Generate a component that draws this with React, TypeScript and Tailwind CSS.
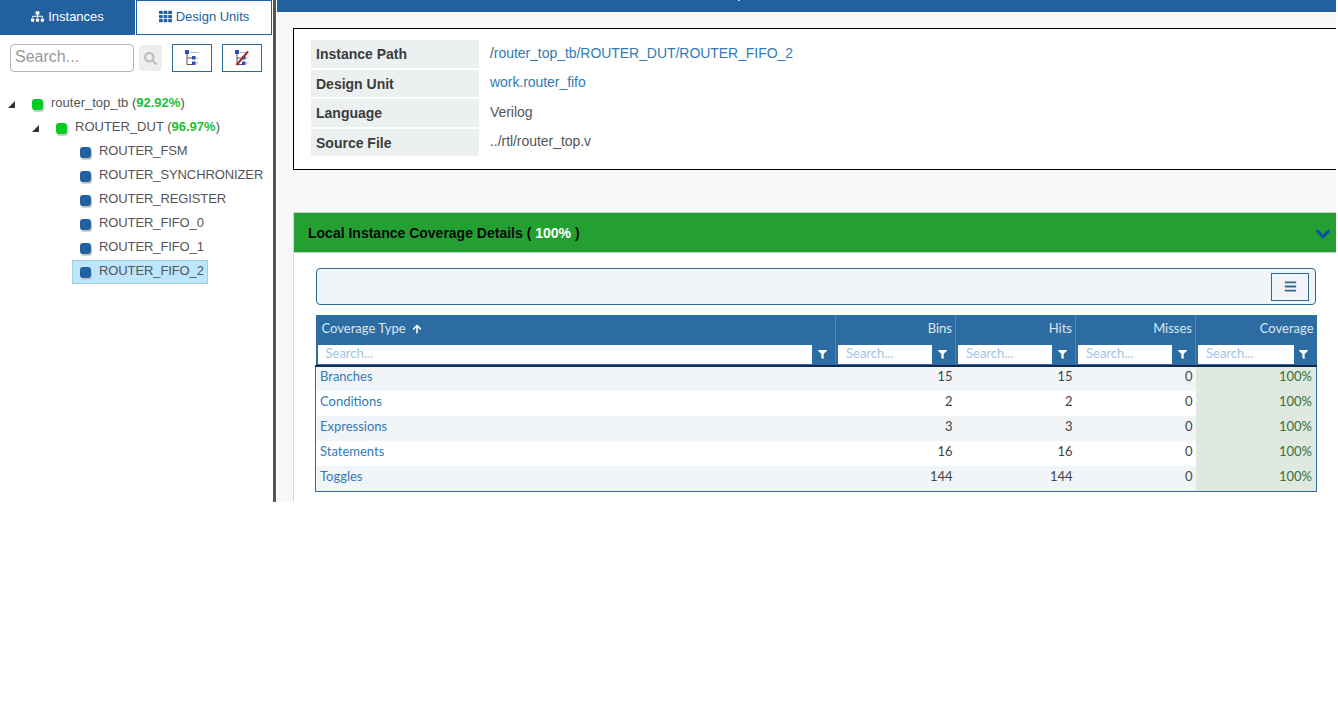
import React from 'react';
import { FaSitemap, FaTh, FaSearch, FaChevronDown, FaBars, FaFilter, FaArrowUp } from 'react-icons/fa';

const SANS = "font-['Liberation_Sans',Arial,sans-serif]";
const LATO = "font-['Lato',sans-serif]";

const infoRows = [
    { label: 'Instance Path', h: 'h-[28px]', mb: 'mb-[2px]', pt: 'pt-[3px]', labelPt: '' },
    { label: 'Design Unit', h: 'h-[27px]', mb: 'mb-[2px]', pt: 'pt-[2px]', labelPt: 'pt-[2px]' },
    { label: 'Language', h: 'h-[28px]', mb: 'mb-[2px]', pt: 'pt-[3px]', labelPt: '' },
    { label: 'Source File', h: 'h-[27px]', mb: '', pt: 'pt-[2px]', labelPt: 'pt-[2px]' },
];

const coverageRows = [
    { name: 'Branches', bins: 15, hits: 15, misses: 0 },
    { name: 'Conditions', bins: 2, hits: 2, misses: 0 },
    { name: 'Expressions', bins: 3, hits: 3, misses: 0 },
    { name: 'Statements', bins: 16, hits: 16, misses: 0 },
    { name: 'Toggles', bins: 144, hits: 144, misses: 0 },
];

const Node = ({ color }: { color: 'green' | 'blue' }) => (
    <span
        className={`block w-[11px] h-[11px] rounded-[3px] shadow-[1px_2px_1px_#c4c8cc] ${color === 'green' ? 'bg-[#00cc22]' : 'bg-[#22609f]'}`}
    />
);

const Caret = () => (
    <svg width="7" height="7" viewBox="0 0 7 7" className="block">
        <path d="M7 0V7H0Z" fill="#333" />
    </svg>
);

const TreeIcon = ({ crossed }: { crossed?: boolean }) => (
    <svg width="16" height="16" viewBox="0 0 16 16" className="block">
        <path d="M3 3V14.5H8M3 8H8" stroke="#555" strokeWidth="1" fill="none" />
        <path d="M6 2.5H14.5M11 8H14.5M11 13H14.5" stroke="#b5b5b5" strokeWidth="1" />
        <rect x="1" y="0" width="4" height="4" fill="#2b4fb3" />
        <rect x="8" y="6" width="3.5" height="3.5" fill="#2b4fb3" />
        <rect x="8" y="11.5" width="3.5" height="3.5" fill="#2b4fb3" />
        {crossed && <path d="M2.5 15L14 1.5" stroke="#a52a2a" strokeWidth="2" />}
    </svg>
);

const FilterInput = () => (
    <div className="flex h-[19px] mx-[2px] text-left">
        <div className="flex-1 min-w-0 bg-white pl-[8px] text-[13px] leading-[17px] text-[#a3c4e6]">Search...</div>
        <div className="w-[21px] pr-[1px] flex items-center justify-center text-white">
            <FaFilter size={9} />
        </div>
    </div>
);

const TreeItem = ({ name, selected }: { name: string; selected?: boolean }) => (
    <div className="h-[24px] pl-[72px] flex">
        <div
            className={`flex items-center h-[24px] w-[136px] border ${selected ? 'bg-[#bde6fb] border-[#9dd0ea]' : 'border-transparent'}`}
        >
            <span className="ml-[7px] mr-[8px]"><Node color="blue" /></span>
            <span className="text-[13px] text-[#555] relative -top-[1px] whitespace-nowrap tracking-[-0.1px]">{name}</span>
        </div>
    </div>
);

export default function App() {
    return (
        <div className={`flex w-[1336px] h-[502px] overflow-hidden bg-white ${SANS}`}>
            <aside className="w-[273px] shrink-0 bg-white">
                <div className="flex h-[36px]">
                    <div className="w-[135px] h-[35px] pb-[2px] bg-[#22609f] text-white text-[13px] flex items-center justify-center gap-[4px]">
                        <FaSitemap size={13} />
                        Instances
                    </div>
                    <div className="ml-[1px] w-[136px] h-[35px] pb-[2px] border border-[#22609f] text-[#22609f] text-[13px] flex items-center justify-center gap-[4px]">
                        <FaTh size={13} />
                        Design Units
                    </div>
                </div>
                <div className="flex items-center h-[28px] mt-[8px] pl-[10px]">
                    <div className="w-[124px] h-[28px] border border-[#b4b4b4] rounded-[4px] pl-[4px] text-[16px] leading-[23px] text-[#999]">
                        Search...
                    </div>
                    <div className="ml-[5px] w-[23px] h-[26px] bg-[#eeeeee] rounded-[4px] flex items-center justify-center text-[#bbb]">
                        <FaSearch size={13} />
                    </div>
                    <div className="ml-[10px] w-[40px] h-[28px] border border-[#2c6a94] flex items-center justify-center">
                        <TreeIcon />
                    </div>
                    <div className="ml-[10px] w-[40px] h-[28px] border border-[#2c6a94] flex items-center justify-center">
                        <TreeIcon crossed />
                    </div>
                </div>
                <div className="mt-[20px]">
                    <div className="h-[24px] flex items-center pl-[8px] text-[13px] text-[#555]">
                        <Caret />
                        <span className="ml-[17px] mr-[8px]"><Node color="green" /></span>
                        <span className="relative -top-[1px]">
                            router_top_tb (<b className="text-[#19c136]">92.92%</b>)
                        </span>
                    </div>
                    <div className="h-[24px] flex items-center pl-[32px] text-[13px] text-[#555]">
                        <Caret />
                        <span className="ml-[17px] mr-[8px]"><Node color="green" /></span>
                        <span className="relative -top-[1px]">
                            ROUTER_DUT (<b className="text-[#19c136]">96.97%</b>)
                        </span>
                    </div>
                    <TreeItem name="ROUTER_FSM" />
                    <TreeItem name="ROUTER_SYNCHRONIZER" />
                    <TreeItem name="ROUTER_REGISTER" />
                    <TreeItem name="ROUTER_FIFO_0" />
                    <TreeItem name="ROUTER_FIFO_1" />
                    <TreeItem name="ROUTER_FIFO_2" selected />
                </div>
            </aside>

            <div className="w-[4px] shrink-0 bg-white border-l-[3px] border-[#555]" />

            <main className="flex-1 min-w-0 bg-[#f8f8f8]">
                <div className="h-[12px] bg-[#22609f]">
                    <div className="ml-[461px] w-[2px] h-[1px] bg-[#c9d8e8]" />
                </div>

                <section className="ml-[16px] mt-[16px] h-[142px] bg-white border border-black border-r-0 pl-[17px] pt-[11px]">
                    {infoRows.map((row, i) => (
                        <div key={row.label} className={`flex ${row.mb}`}>
                            <div className={`w-[168px] ${row.h} ${row.labelPt} bg-[#ecf0f1] pl-[5px] flex items-center text-[14px] font-bold text-[#3b3b3b]`}>
                                {row.label}
                            </div>
                            <div className={`ml-[11px] ${row.pt} text-[14px] tracking-[-0.05px]`}>
                                {i === 0 && (
                                    <span className="text-[#337ab7]">
                                        <span className="text-[#555]">/</span>router_top_tb/ROUTER_DUT/ROUTER_FIFO_2
                                    </span>
                                )}
                                {i === 1 && <span className="text-[#337ab7]">work.router_fifo</span>}
                                {i === 2 && <span className="text-[#555]">Verilog</span>}
                                {i === 3 && <span className="text-[#555]">../rtl/router_top.v</span>}
                            </div>
                        </div>
                    ))}
                </section>

                <section className="ml-[16px] mt-[42px] h-[290px] bg-white border-l border-[#d9d9d9]">
                    <div className="h-[41px] pt-[2px] bg-[#24a033] border-y border-[#b9dcbd] pl-[14px] pr-[5px] flex items-center justify-between text-[14px] font-bold text-[#0a0a0a]">
                        <span>
                            Local Instance Coverage Details ( <span className="text-white">100%</span> )
                        </span>
                        <FaChevronDown size={16} stroke="currentColor" strokeWidth={30} className="text-[#0f4fa0]" />
                    </div>

                    <div className="ml-[22px] w-[1000px] mt-[15px] h-[37px] bg-[#f1f5f9] border border-[#2c6a94] rounded-[4px] flex items-center justify-end pr-[6px]">
                        <div className="w-[38px] h-[28px] border border-[#2c6a94] flex items-center justify-center text-[#2c6a94]">
                            <FaBars size={13} />
                        </div>
                    </div>

                    <table className={`ml-[21px] mt-[10px] w-[1001px] table-fixed border-collapse text-[13px] ${LATO}`}>
                        <colgroup>
                            <col className="w-[520px]" />
                            <col className="w-[120px]" />
                            <col className="w-[120px]" />
                            <col className="w-[120px]" />
                            <col className="w-[121px]" />
                        </colgroup>
                        <thead>
                            <tr className="bg-[#2d6ca2] text-[#dbe6f0] font-normal h-[30px]">
                                <th className="font-normal text-left pl-[6px] pb-[2px] border-r border-[#4f86b6]">
                                    <span className="inline-flex items-center gap-[6px]">
                                        Coverage Type <FaArrowUp size={10} className="text-white" />
                                    </span>
                                </th>
                                {['Bins', 'Hits', 'Misses', 'Coverage'].map((h) => (
                                    <th key={h} className="font-normal text-right pr-[3px] pb-[2px] border-r last:border-r-0 border-[#4f86b6]">
                                        {h}
                                    </th>
                                ))}
                            </tr>
                            <tr className="bg-[#2d6ca2] h-[21px] border-b-2 border-[#12294a]">
                                {[0, 1, 2, 3, 4].map((i) => (
                                    <th key={i} className="font-normal p-0 align-top border-r last:border-r-0 border-[#4f86b6]">
                                        <FilterInput />
                                    </th>
                                ))}
                            </tr>
                        </thead>
                        <tbody className="border border-t-0 border-[#2d6ca2]">
                            {coverageRows.map((row, i) => (
                                <tr key={row.name} className={`h-[25px] ${i % 2 === 0 ? 'bg-[#f1f5f8]' : 'bg-white'}`}>
                                    <td className="pl-[4px] pb-[4px] text-[#337ab7]">{row.name}</td>
                                    <td className="text-right pr-[3px] pb-[4px] text-[#444]">{row.bins}</td>
                                    <td className="text-right pr-[3px] pb-[4px] text-[#444]">{row.hits}</td>
                                    <td className="text-right pr-[3px] pb-[4px] text-[#444]">{row.misses}</td>
                                    <td className="text-right pr-[4px] pb-[4px] bg-[#dfe9df] text-[#34703f]">100%</td>
                                </tr>
                            ))}
                        </tbody>
                    </table>
                </section>
            </main>
        </div>
    );
}
